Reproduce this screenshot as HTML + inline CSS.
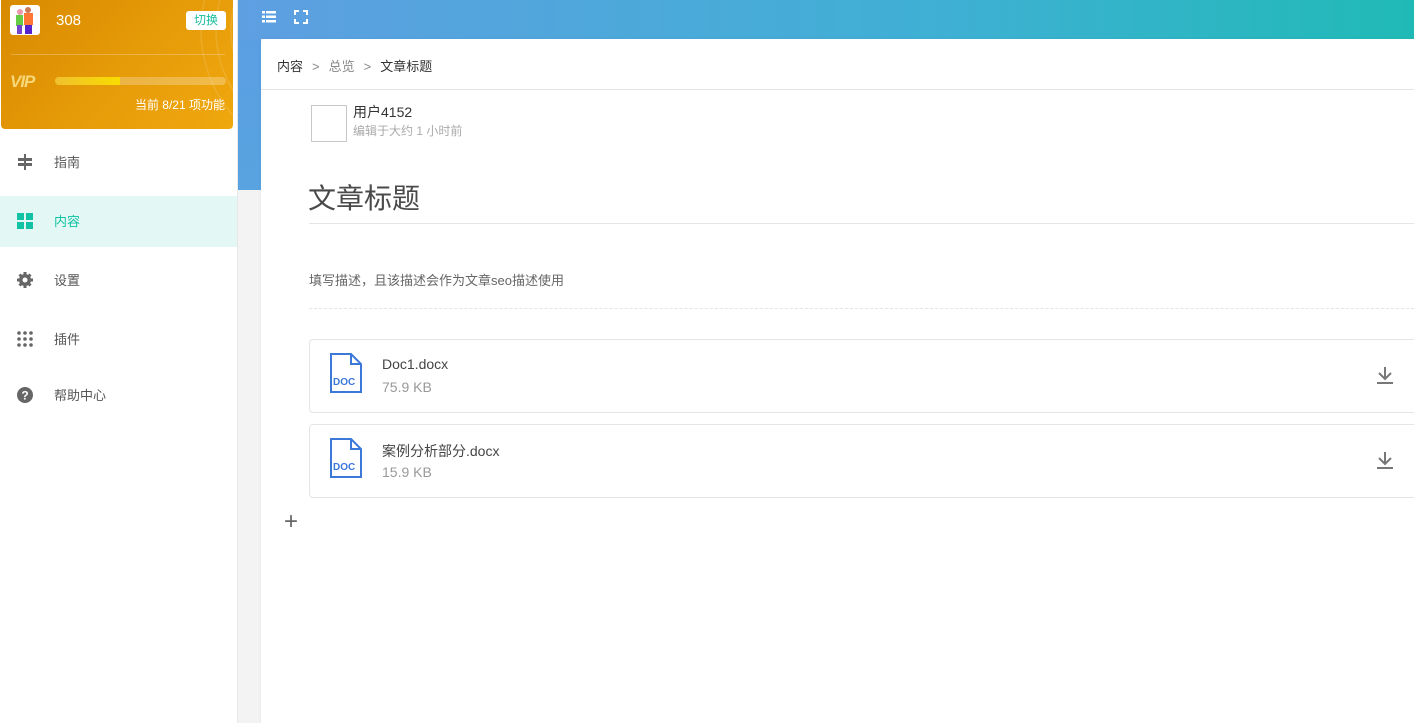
<!DOCTYPE html>
<html><head><meta charset="utf-8"><style>
*{margin:0;padding:0;box-sizing:border-box}
body{width:1414px;height:723px;overflow:hidden;background:#f3f3f3;font-family:"Liberation Sans","Noto Sans CJK SC",sans-serif;position:relative}
.side{position:absolute;left:0;top:0;width:238px;height:723px;background:#fff;border-right:1px solid #e8e8e8}
.vip{position:absolute;left:1px;top:0;width:232px;height:129px;border-radius:0 0 4px 4px;background:linear-gradient(135deg,#d88a00,#e59a08 50%,#f0a80e);overflow:hidden}
.av{position:absolute;left:9px;top:5px;width:30px;height:30px;background:#fff;border-radius:3px;overflow:hidden}
.name{position:absolute;left:55px;top:12px;color:#fff;font-size:15px}
.sw{position:absolute;left:185px;top:11px;width:40px;height:19px;background:#fff;border-radius:3px;color:#1abc9c;font-size:12px;text-align:center;line-height:19px}
.hr{position:absolute;left:10px;right:8px;top:54px;height:1px;background:rgba(255,255,255,.25)}
.viptxt{position:absolute;left:9px;top:72px;color:#f6d77a;font-style:italic;font-weight:bold;font-size:17px;letter-spacing:-1px}
.bar{position:absolute;left:54px;top:77px;width:171px;height:8px;border-radius:4px;background:rgba(255,255,255,.25)}
.bar i{display:block;width:65px;height:8px;border-radius:4px 0 0 4px;background:linear-gradient(90deg,#f0c030,#f8dc00)}
.cnt{position:absolute;right:8px;top:96px;color:#fff;font-size:12px}
.mi{position:absolute;left:0;width:237px;height:51px;font-size:13px;color:#555;line-height:51px}
.mi span{position:absolute;left:54px}
.mi svg{position:absolute;left:17px;top:17px}
.act{background:#e3f8f4;color:#11c2a4}
.top{position:absolute;left:238px;top:0;width:1176px;height:39px;background:linear-gradient(90deg,#5e9fe2,#3fb0d4 60%,#20bab6)}
.blue2{position:absolute;left:238px;top:39px;width:23px;height:151px;background:linear-gradient(180deg,#5a9fe2,#58a3e0)}
.card{position:absolute;left:261px;top:39px;width:1153px;height:684px;background:#fff;border-radius:4px 0 0 0;box-shadow:0 0 3px rgba(0,0,0,.06)}
.bc{position:absolute;left:16px;top:17px;font-size:13px;color:#333}
.bc .s{color:#888;margin:0 9px}
.bc .g{color:#888}
.l1{position:absolute;left:0;right:0;top:50px;height:1px;background:#e5e5e5}
.img{position:absolute;left:50px;top:66px;width:36px;height:37px;border:1px solid #c8c8c8}
.un{position:absolute;left:92px;top:63px;font-size:14px;color:#333}
.ut{position:absolute;left:92px;top:83px;font-size:12px;color:#aaa}
.title{position:absolute;left:47px;top:138px;font-size:28px;color:#4a4a4a}
.l2{position:absolute;left:48px;right:0;top:184px;height:1px;background:#e5e5e5}
.desc{position:absolute;left:48px;top:231px;font-size:13px;color:#666}
.l3{position:absolute;left:48px;right:0;top:269px;border-top:1px dashed #e5e5e5}
.f{position:absolute;left:48px;right:-4px;height:74px;border:1px solid #e5e5e5;border-radius:4px}
.f .n{position:absolute;left:72px;top:16px;font-size:14px;color:#444}
.f .z{position:absolute;left:72px;top:39px;font-size:14px;color:#999}
.f .ic{position:absolute;left:20px;top:13px}
.f .dl{position:absolute;left:1066px;top:26px}
.plus{position:absolute;left:23px;top:469px;font-size:24px;color:#666;font-weight:300}
</style></head><body>
<div class="side">
 <div class="vip">
  <svg style="position:absolute;left:0;top:0" width="232" height="129"><g fill="none" stroke="rgba(255,255,255,.12)" stroke-width="1.5"><circle cx="330" cy="30" r="40"/><circle cx="330" cy="30" r="55"/><circle cx="330" cy="30" r="70"/><circle cx="330" cy="30" r="85"/><circle cx="330" cy="30" r="100"/><circle cx="330" cy="30" r="115"/><circle cx="330" cy="30" r="130"/></g></svg>
  <div class="av"><svg width="30" height="30"><rect x="6" y="10" width="7" height="11" fill="#6c4"/><rect x="14" y="8" width="9" height="12" fill="#f73"/><circle cx="10" cy="7" r="3" fill="#e9a"/><circle cx="18" cy="5" r="3" fill="#c75"/><rect x="7" y="20" width="5" height="9" fill="#74c"/><rect x="15" y="20" width="7" height="9" fill="#52c"/></svg></div>
  <div class="name">308</div>
  <div class="sw">切换</div>
  <div class="hr"></div>
  <div class="viptxt">VIP</div>
  <div class="bar"><i></i></div>
  <div class="cnt">当前 8/21 项功能</div>
 </div>
 <div class="mi" style="top:137px"><svg width="16" height="16" fill="#666"><rect x="7" y="0" width="2" height="16"/><rect x="1" y="4" width="14" height="3"/><rect x="1" y="9" width="14" height="3"/></svg><span>指南</span></div>
 <div class="mi act" style="top:196px"><svg width="16" height="16" fill="#11c2a4"><rect x="0" y="0" width="7" height="7"/><rect x="9" y="0" width="7" height="7"/><rect x="0" y="9" width="7" height="7"/><rect x="9" y="9" width="7" height="7"/></svg><span>内容</span></div>
 <div class="mi" style="top:255px"><svg width="16" height="16"><circle cx="8" cy="8" r="6" fill="#666"/><g stroke="#666" stroke-width="3"><line x1="8" y1="0" x2="8" y2="16"/><line x1="0" y1="8" x2="16" y2="8"/><line x1="2.5" y1="2.5" x2="13.5" y2="13.5"/><line x1="13.5" y1="2.5" x2="2.5" y2="13.5"/></g><circle cx="8" cy="8" r="2.5" fill="#fff"/></svg><span>设置</span></div>
 <div class="mi" style="top:314px"><svg width="16" height="16" fill="#666"><circle cx="2" cy="2" r="1.8"/><circle cx="8" cy="2" r="1.8"/><circle cx="14" cy="2" r="1.8"/><circle cx="2" cy="8" r="1.8"/><circle cx="8" cy="8" r="1.8"/><circle cx="14" cy="8" r="1.8"/><circle cx="2" cy="14" r="1.8"/><circle cx="8" cy="14" r="1.8"/><circle cx="14" cy="14" r="1.8"/></svg><span>插件</span></div>
 <div class="mi" style="top:370px"><svg width="16" height="16"><circle cx="8" cy="8" r="8" fill="#666"/><text x="8" y="12.5" font-size="12" font-weight="bold" fill="#fff" text-anchor="middle" font-family="Liberation Sans">?</text></svg><span>帮助中心</span></div>
</div>
<div class="top">
 <svg style="position:absolute;left:24px;top:11px" width="14" height="12" fill="#fff"><rect x="0" y="0" width="3" height="2.5"/><rect x="4" y="0" width="10" height="2.5"/><rect x="0" y="4.5" width="3" height="2.5"/><rect x="4" y="4.5" width="10" height="2.5"/><rect x="0" y="9" width="3" height="2.5"/><rect x="4" y="9" width="10" height="2.5"/></svg>
 <svg style="position:absolute;left:56px;top:10px" width="14" height="14" fill="none" stroke="#fff" stroke-width="2"><path d="M1 5V1h4M9 1h4v4M13 9v4H9M5 13H1V9"/></svg>
</div>
<div class="blue2"></div>
<div class="card">
 <div class="bc">内容<span class="s">&gt;</span><span class="g">总览</span><span class="s">&gt;</span>文章标题</div>
 <div class="l1"></div>
 <div class="img"></div>
 <div class="un">用户4152</div>
 <div class="ut">编辑于大约 1 小时前</div>
 <div class="title">文章标题</div>
 <div class="l2"></div>
 <div class="desc">填写描述，且该描述会作为文章seo描述使用</div>
 <div class="l3"></div>
 <div class="f" style="top:300px">
  <svg class="ic" width="32" height="40" fill="none" stroke="#3b78d8" stroke-width="2"><path d="M1 1h20l10 10v28H1z M21 1v10h10"/><text x="3" y="32" font-size="10" font-weight="bold" fill="#3b78d8" stroke="none" font-family="Liberation Sans">DOC</text></svg>
  <div class="n">Doc1.docx</div><div class="z">75.9 KB</div>
  <svg class="dl" width="18" height="18" fill="none" stroke="#777" stroke-width="2"><path d="M9 1v11M3 7l6 6 6-6M1 17h16"/></svg>
 </div>
 <div class="f" style="top:385px">
  <svg class="ic" width="32" height="40" fill="none" stroke="#3b78d8" stroke-width="2"><path d="M1 1h20l10 10v28H1z M21 1v10h10"/><text x="3" y="32" font-size="10" font-weight="bold" fill="#3b78d8" stroke="none" font-family="Liberation Sans">DOC</text></svg>
  <div class="n">案例分析部分.docx</div><div class="z">15.9 KB</div>
  <svg class="dl" width="18" height="18" fill="none" stroke="#777" stroke-width="2"><path d="M9 1v11M3 7l6 6 6-6M1 17h16"/></svg>
 </div>
 <div class="plus">+</div>
</div>
</body></html>
